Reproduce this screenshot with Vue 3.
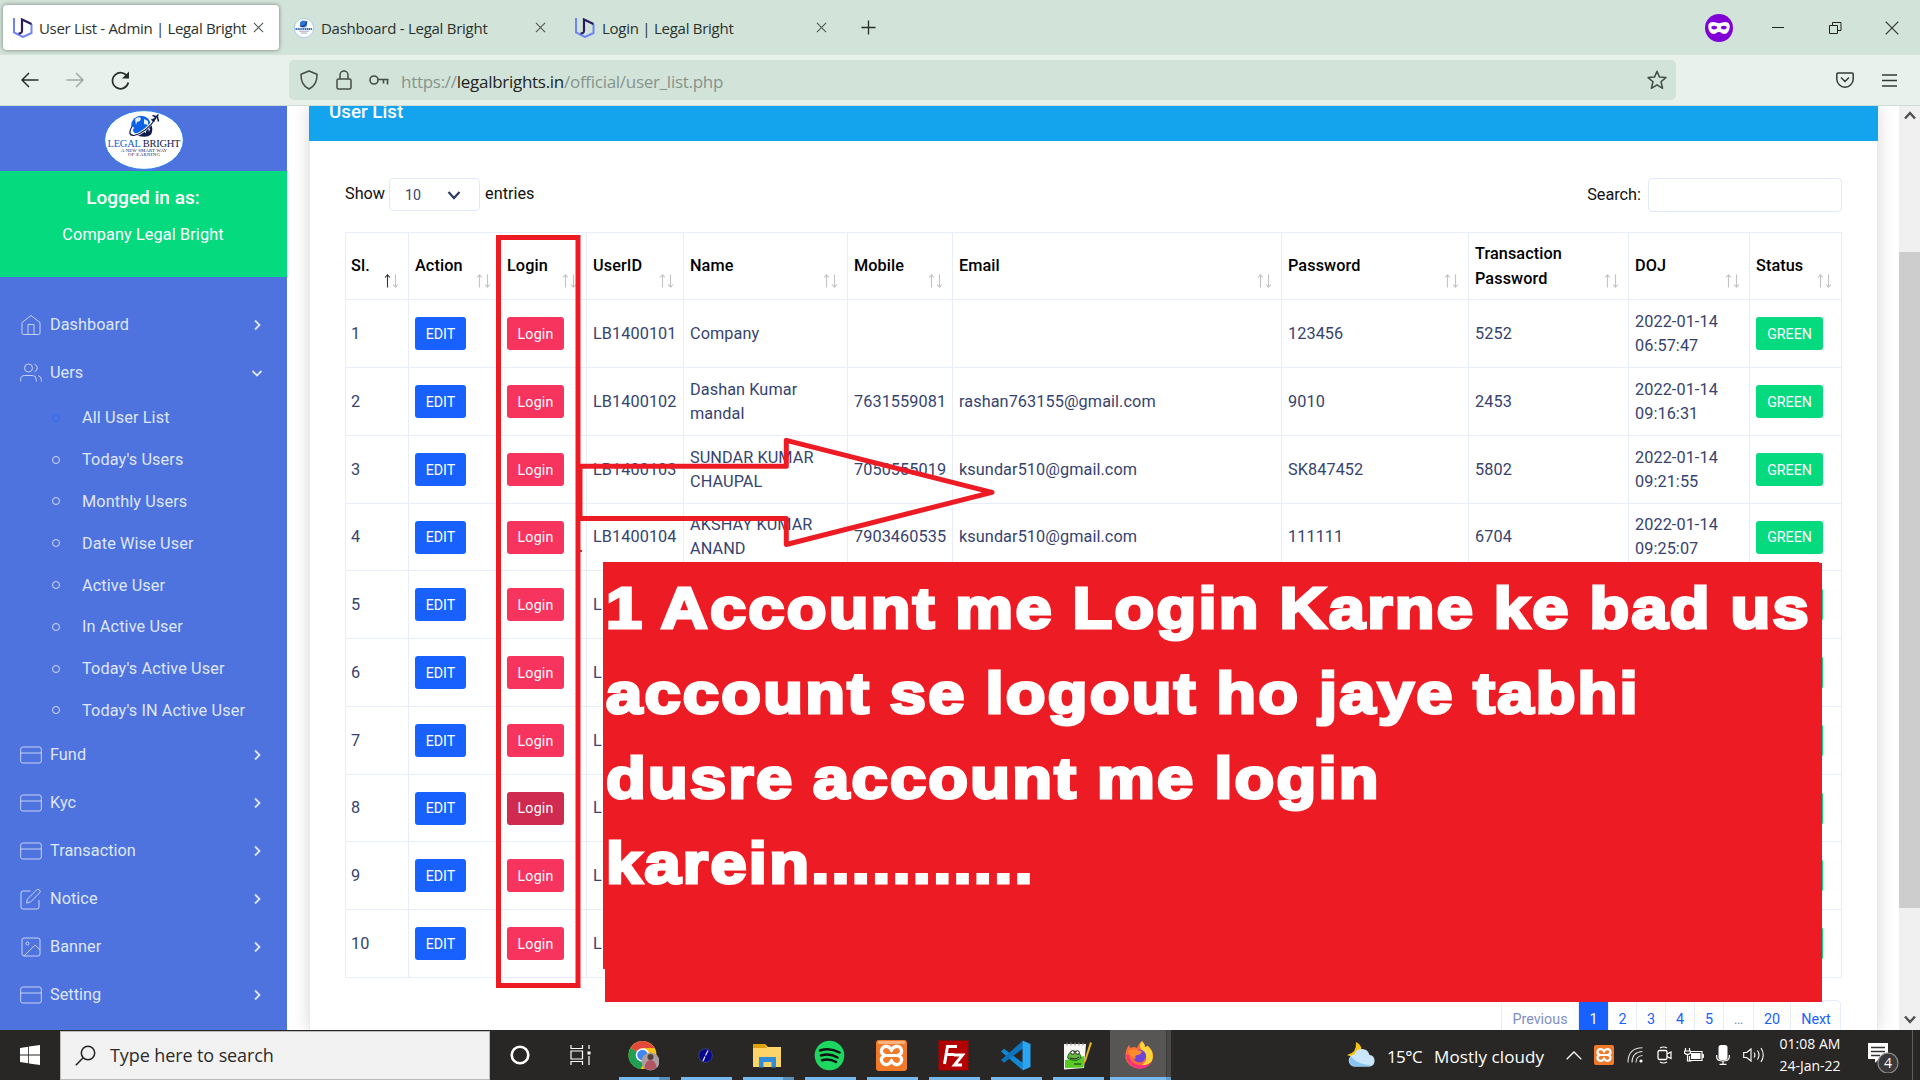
<script setup>
const tabs = [
  { title: 'User List - Admin | Legal Bright', icon: 'mark', active: true, width: 276 },
  { title: 'Dashboard - Legal Bright', icon: 'globe', active: false, width: 281 },
  { title: 'Login | Legal Bright', icon: 'mark', active: false, width: 281 },
]

const mainItems = [
  { label: 'Dashboard', icon: 'home' },
  { label: 'Uers', icon: 'users', open: true },
]
const subItems = [
  'All User List', "Today's Users", 'Monthly Users', 'Date Wise User',
  'Active User', 'In Active User', "Today's Active User", "Today's IN Active User",
]
const restItems = [
  { label: 'Fund', icon: 'card' },
  { label: 'Kyc', icon: 'card' },
  { label: 'Transaction', icon: 'card' },
  { label: 'Notice', icon: 'edit' },
  { label: 'Banner', icon: 'image' },
  { label: 'Setting', icon: 'card' },
]
const navGroups = [
  { items: mainItems, subs: subItems },
  { items: restItems, subs: [] },
]

const columns = [
  { title: 'Sl.', width: 63 },
  { title: 'Action', width: 92 },
  { title: 'Login', width: 86 },
  { title: 'UserID', width: 97 },
  { title: 'Name', width: 164 },
  { title: 'Mobile', width: 105 },
  { title: 'Email', width: 329 },
  { title: 'Password', width: 187 },
  { title: 'Transaction Password', width: 160 },
  { title: 'DOJ', width: 121 },
  { title: 'Status', width: 92 },
]

const users = [
  { id: 'LB1400101', name: 'Company', mobile: '', email: '', pw: '123456', tpw: '5252', doj: '2022-01-14 06:57:47', h: 68 },
  { id: 'LB1400102', name: 'Dashan Kumar mandal', mobile: '7631559081', email: 'rashan763155@gmail.com', pw: '9010', tpw: '2453', doj: '2022-01-14 09:16:31', h: 68 },
  { id: 'LB1400103', name: 'SUNDAR KUMAR CHAUPAL', mobile: '7050555019', email: 'ksundar510@gmail.com', pw: 'SK847452', tpw: '5802', doj: '2022-01-14 09:21:55', h: 68 },
  { id: 'LB1400104', name: 'AKSHAY KUMAR ANAND', mobile: '7903460535', email: 'ksundar510@gmail.com', pw: '111111', tpw: '6704', doj: '2022-01-14 09:25:07', h: 67 },
  { id: 'L', h: 68 },
  { id: 'L', h: 68 },
  { id: 'L', h: 68 },
  { id: 'L', h: 67, hover: true },
  { id: 'L', h: 68 },
  { id: 'L', h: 68 },
]

const pages = [
  { label: 'Previous', width: 77, muted: true },
  { label: '1', width: 30, active: true },
  { label: '2', width: 28 },
  { label: '3', width: 29 },
  { label: '4', width: 29 },
  { label: '5', width: 29 },
  { label: '…', width: 30, muted: true },
  { label: '20', width: 37 },
  { label: 'Next', width: 51 },
]

const apps = ['chrome', 'disc', 'folder', 'spotify', 'xampp', 'filezilla', 'vscode', 'notepad', 'firefox']
</script>

<template>
  <div class="screen">
    <header class="tabbar">
      <div v-for="(t, i) in tabs" :key="i" class="tab" :class="{ active: t.active }" :style="{ width: t.width + 'px' }">
        <svg v-if="t.icon === 'mark'" class="fav" viewBox="0 0 20 20">
          <path d="M1 0v14.5L10 19l8.500-4V6" fill="none" stroke="#7184f5" stroke-width="2" />
          <path d="M5.500 15.500c3 0 3.500-1 3.500-3V1.500L18.500 6" fill="none" stroke="#2a1a63" stroke-width="2.200" />
        </svg>
        <svg v-else class="fav" viewBox="0 0 20 20">
          <circle cx="10" cy="10" r="9.600" fill="#fff" stroke="#8fc0ee" stroke-width=".7" />
          <circle cx="9.500" cy="6" r="3.600" fill="#2a78d8" /><path d="M6 8q5 2 7-5" stroke="#14285c" fill="none" />
          <path d="M1.500 11h17" stroke="#3a6db8" stroke-width="1.800" stroke-dasharray="1.400 .5" /><path d="M5 13.200h10M7 15h6" stroke="#8a93b8" stroke-width=".8" />
        </svg>
        <span class="tab-title">{{ t.title }}</span>
        <svg class="tab-x" viewBox="0 0 12 12"><path d="M1 1l10 10M11 1L1 11" stroke="#4a524e" stroke-width="1.100" /></svg>
      </div>
      <svg class="plus" viewBox="0 0 16 16"><path d="M8 .5v15M.5 8h15" stroke="#27302b" stroke-width="1.400" /></svg>
      <div class="win">
        <svg width="28" height="28" viewBox="0 0 28 28">
          <circle cx="14" cy="14" r="14" fill="#8000d7" />
          <path d="M3.300 11.500C3.500 9 5.500 8 8 8c3 0 4.500 1.300 6 1.300S17 8 20 8c2.500 0 4.500 1 4.700 3.500.3 4-1.700 8.500-5.200 8.500-2.500 0-3.500-2-5.500-2s-3 2-5.500 2c-3.500 0-5.500-4.500-5.200-8.500z" fill="#fff" />
          <ellipse cx="9.200" cy="13.600" rx="2.900" ry="1.800" fill="#8000d7" /><ellipse cx="18.800" cy="13.600" rx="2.900" ry="1.800" fill="#8000d7" />
        </svg>
        <svg width="12" height="14" viewBox="0 0 12 14"><path d="M0 6.500h12" stroke="#222" /></svg>
        <svg width="13" height="14" viewBox="0 0 13 14"><path d="M.5 4.500h8v8h-8zM3.500 4v-2.500h8.500v8H9" fill="none" stroke="#222" /></svg>
        <svg width="14" height="14" viewBox="0 0 14 14"><path d="M.7.7l12.600 12.600M13.300.7L.7 13.300" stroke="#333" stroke-width="1.200" /></svg>
      </div>
    </header>

    <div class="toolbar">
      <div class="nav-buttons">
        <svg width="18" height="16" viewBox="0 0 18 16"><path d="M17.500 8H1M8 1L1 8l7 7" fill="none" stroke="#262e2a" stroke-width="1.500" /></svg>
        <svg width="18" height="16" viewBox="0 0 18 16"><path d="M.5 8H17M10 1l7 7-7 7" fill="none" stroke="#a0aaa4" stroke-width="1.500" /></svg>
        <svg width="19" height="19" viewBox="0 0 19 19"><path d="M17 7A8 8 0 1 0 17.300 11.500" fill="none" stroke="#262e2a" stroke-width="1.700" /><path d="M18 .5v7h-7z" fill="#262e2a" /></svg>
      </div>
      <div class="urlbar">
        <svg width="18" height="20" viewBox="0 0 18 20"><path d="M9 1l8 3.200C17 11 15.500 15.500 9 19 2.500 15.500 1 11 1 4.200z" fill="none" stroke="#444d48" stroke-width="1.500" stroke-linejoin="round" /></svg>
        <svg width="16" height="20" viewBox="0 0 16 20"><rect x="1" y="9" width="14" height="10" rx="1.500" fill="none" stroke="#444d48" stroke-width="1.500" /><path d="M4 9V5a4 4 0 0 1 8 0v4" fill="none" stroke="#444d48" stroke-width="1.500" /></svg>
        <svg width="20" height="12" viewBox="0 0 20 12"><circle cx="5" cy="6" r="4" fill="none" stroke="#444d48" stroke-width="1.600" /><path d="M9 5.500h10.500M14.500 5.500v4M18.500 5.500v5" fill="none" stroke="#444d48" stroke-width="1.600" /></svg>
        <span class="url">https://<b>legalbrights.in</b>/official/user_list.php</span>
        <svg class="star" width="20" height="20" viewBox="0 0 20 20"><path d="M10 1.200l2.500 5.900 6.400.5-4.900 4.200 1.600 6.500L10 14.800l-5.600 3.500L6 11.800 1.100 7.600l6.400-.5z" fill="none" stroke="#444d48" stroke-width="1.500" stroke-linejoin="round" /></svg>
      </div>
      <svg class="pocket" width="18" height="16" viewBox="0 0 18 16"><path d="M2 1h14a1.200 1.200 0 0 1 1.200 1.200V7a8.200 8.200 0 0 1-16.400 0V2.200A1.200 1.200 0 0 1 2 1zM5 5.500l4 4 4-4" fill="none" stroke="#333b37" stroke-width="1.500" /></svg>
      <svg class="menu" width="15" height="13" viewBox="0 0 15 13"><path d="M0 1h15M0 6.500h15M0 12h15" stroke="#333b37" stroke-width="1.300" /></svg>
    </div>

    <main class="page">
      <aside class="sidebar">
        <div class="brand">
          <svg width="80" height="60" viewBox="0 0 80 60">
            <ellipse cx="40" cy="30" rx="39.400" ry="29.400" fill="#fff" stroke="#2a7cf0" stroke-width="1" />
            <circle cx="37" cy="15.500" r="9.800" fill="#0d63e8" />
            <path d="M31 9q3-3 6-1l-1 3-3 1-1 3zM40 9l4 2v4l-4-1z" fill="#e3eeff" />
            <path d="M33 25.500q10-4 13-13 4 6 1 12-4 4-14 1z" fill="#101d4c" />
            <path d="M39 21l3-2v4zM44 17l2 2-1 3z" fill="#fff" />
            <path d="M29 17q-5 8 1 8.500Q42 23 52 7" fill="none" stroke="#fff" stroke-width="2.600" />
            <path d="M28 16.500q-5 9 2 9Q42 23 52 8" fill="none" stroke="#101d4c" stroke-width="1.200" />
            <path d="M48 11L54.500 4.500M48.500 5.500l5 1.500 1 4.500M47.500 9l3 2.500" fill="none" stroke="#101d4c" stroke-width="1.500" />
            <text x="40" y="37" class="logo-big" textLength="73"><tspan fill="#1560c8">LEGAL</tspan> <tspan fill="#14204f">BRIGHT</tspan></text>
            <text x="40" y="41.800" class="logo-small" textLength="46">A NEW SMART WAY</text>
            <text x="40" y="45.800" class="logo-small" textLength="32">OF EARNING</text>
          </svg>
        </div>
        <div class="who">
          <strong>Logged in as:</strong>
          <span>Company Legal Bright</span>
        </div>
        <nav>
          <template v-for="(g, gi) in navGroups" :key="gi">
            <div v-for="it in g.items" :key="it.label" class="item">
              <svg class="ico" width="22" height="22" viewBox="0 0 22 22">
                <template v-if="it.icon === 'home'"><path d="M2 8.500L11 1.500l9 7V19a1.500 1.500 0 0 1-1.500 1.500h-15A1.500 1.500 0 0 1 2 19zM8 20.500v-10h6v10" /></template>
                <template v-else-if="it.icon === 'users'"><circle cx="8.500" cy="6" r="4" /><path d="M.7 19.500v-2a4 4 0 0 1 4-4h7.600a4 4 0 0 1 4 4v2M14.500 2.200a4 4 0 0 1 0 7.600M21.300 19.500v-2a4 4 0 0 0-3-3.800" /></template>
                <template v-else-if="it.icon === 'card'"><rect x=".7" y="3" width="20.600" height="16" rx="2" /><path d="M.7 9h20.600" /></template>
                <template v-else-if="it.icon === 'edit'"><path d="M10.500 3H3a2 2 0 0 0-2 2v14a2 2 0 0 0 2 2h14a2 2 0 0 0 2-2v-7M16.500 2a2.100 2.100 0 0 1 3 3l-9 9-4 1 1-4z" /></template>
                <template v-else><rect x="2" y="2" width="18" height="18" rx="2" /><circle cx="7.500" cy="7.500" r="1.500" /><path d="M20 14l-5-5L4 20" /></template>
              </svg>
              <span>{{ it.label }}</span>
              <svg class="chev" width="12" height="12" viewBox="0 0 12 12"><path :d="it.open ? 'M1.500 4L6 8.500 10.500 4' : 'M4 1.500L8.500 6 4 10.500'" /></svg>
            </div>
            <div v-for="(s, si) in g.subs" :key="s" class="sub">
              <i class="bullet" :class="{ on: si === 0 }"></i><span>{{ s }}</span>
            </div>
          </template>
        </nav>
      </aside>

      <section class="content">
        <div class="card">
          <div class="card-head"><h2>User List</h2></div>
          <div class="controls">
            <div class="length">
              <span>Show</span>
              <div class="select"><span>10</span><svg width="14" height="10" viewBox="0 0 14 10"><path d="M1.500 2L7 8l5.500-6" fill="none" stroke="#2c3a66" stroke-width="2.200" /></svg></div>
              <span>entries</span>
            </div>
            <div class="search"><span>Search:</span><div class="search-box"></div></div>
          </div>

          <table>
            <colgroup><col v-for="c in columns" :key="c.title" :style="{ width: c.width + 'px' }" /></colgroup>
            <thead>
              <tr>
                <th v-for="(c, ci) in columns" :key="c.title">
                  <span>{{ c.title }}</span>
                  <svg class="sort" width="15" height="14" viewBox="0 0 15 14">
                    <path d="M3.500 13.500V1M1 3.500L3.500.8 6 3.500" :class="{ on: ci === 0 }" />
                    <path d="M11.500.5V13M9 10.500l2.500 2.700 2.500-2.700" />
                  </svg>
                </th>
              </tr>
            </thead>
            <tbody>
              <tr v-for="(u, ui) in users" :key="ui" :style="{ height: u.h + 'px' }">
                <td>{{ ui + 1 }}</td>
                <td><button class="btn blue">EDIT</button></td>
                <td><button class="btn pink" :class="{ hover: u.hover }">Login</button></td>
                <td>{{ u.id }}</td>
                <td>{{ u.name }}</td>
                <td>{{ u.mobile }}</td>
                <td>{{ u.email }}</td>
                <td>{{ u.pw }}</td>
                <td>{{ u.tpw }}</td>
                <td>{{ u.doj }}</td>
                <td><button class="btn green">GREEN</button></td>
              </tr>
            </tbody>
          </table>

          <div class="pager">
            <span v-for="p in pages" :key="p.label" :class="{ muted: p.muted, active: p.active }" :style="{ width: p.width + 'px' }">{{ p.label }}</span>
          </div>
        </div>
      </section>

      <div class="scroll">
        <svg width="12" height="9" viewBox="0 0 12 9"><path d="M1 7.500L6 2l5 5.500" fill="none" stroke="#505050" stroke-width="2.400" /></svg>
        <div class="thumb"></div>
        <svg class="down" width="12" height="9" viewBox="0 0 12 9"><path d="M1 1.500L6 7l5-5.500" fill="none" stroke="#505050" stroke-width="2.400" /></svg>
      </div>
    </main>

    <svg class="marks" width="1920" height="1080" viewBox="0 0 1920 1080">
      <rect x="498.500" y="237.500" width="79.500" height="748" />
      <path d="M580 466.300h206.300v-26L992 492.300 786.300 544.500v-26H580z" stroke-linejoin="round" />
      <path class="fill" d="M603 562h1216v1h3v439H605v-33h-2zM580 550h2v2h-2z" />
    </svg>
    <div class="note">
      <p>1 Account me Login Karne ke bad us</p>
      <p>account se logout ho jaye tabhi</p>
      <p>dusre account me login</p>
      <p>karein...........</p>
    </div>

    <footer class="taskbar">
      <div class="start"><svg width="20" height="20" viewBox="0 0 20 20"><path d="M0 2.900l8.200-1.200v7.800H0zM9 1.600L20 0v9.500H9zM0 10.400h8.200v7.900L0 17.100zM9 10.400h11V20L9 18.400z" fill="#fff" /></svg></div>
      <div class="find">
        <svg width="21" height="21" viewBox="0 0 21 21"><circle cx="13" cy="8" r="6.700" fill="none" stroke="#222" stroke-width="1.500" /><path d="M8.200 12.800L.8 20.200" stroke="#222" stroke-width="1.500" /></svg>
        <span>Type here to search</span>
      </div>
      <div class="sys"><svg width="20" height="20" viewBox="0 0 20 20"><circle cx="10" cy="10" r="8.300" fill="none" stroke="#fff" stroke-width="2.600" /></svg></div>
      <div class="sys wide"><svg width="21" height="20" viewBox="0 0 21 20"><path d="M1 0v3.500h11.500V0M1 20v-3.500h11.500V20M1 6h11.500v8H1zM19 0v4M19 11v9" fill="none" stroke="#fff" stroke-width="1.200" /><rect x="17.500" y="6.500" width="3" height="3" fill="#fff" /></svg></div>
      <div class="apps">
        <div v-for="a in apps" :key="a" class="app" :class="a">
          <svg width="31" height="31" viewBox="0 0 31 31">
            <template v-if="a === 'chrome'">
              <circle cx="14.500" cy="15" r="14" fill="#fbc116" /><path d="M14.500 15L2.400 8A14 14 0 0 1 26.600 8H14.500z" fill="#e2493b" /><path d="M14.500 15L2.400 8A14 14 0 0 0 12.500 29l5-8z" fill="#1fa053" />
              <circle cx="14.500" cy="15" r="6.800" fill="#fff" /><circle cx="14.500" cy="15" r="5.300" fill="#4285f4" />
              <circle cx="22.500" cy="21.500" r="9" fill="#a99fa0" /><circle cx="22.500" cy="17" r="3" fill="#57403a" /><path d="M16.500 28q1-8 6-8t6 8q-6 4-12 0z" fill="#b25560" />
            </template>
            <template v-else-if="a === 'disc'"><circle cx="15.500" cy="15.500" r="6.800" fill="#06068c" stroke="#4c5a8a" stroke-width=".6" /><path d="M18 10.500l-2.500 5M15 16.500L13 21" stroke="#e3e6fa" stroke-width="1.200" /></template>
            <template v-else-if="a === 'folder'"><path d="M1 4h12l3 3h13v20H1z" fill="#fdd468" /><path d="M1 4h12l2 4H1z" fill="#e0a008" /><path d="M7 27.500V17h17v10.500h-4.500V22h-8v5.500z" fill="#2f8edb" /></template>
            <template v-else-if="a === 'spotify'"><circle cx="15.500" cy="15.500" r="14.800" fill="#1ed760" /><path d="M6 10.500q10-3.500 19.500 2M7 15.500q9-2.500 16.500 2M8 20.300q7.500-2 14 1.700" fill="none" stroke="#111" stroke-width="2.500" stroke-linecap="round" /></template>
            <template v-else-if="a === 'xampp'"><rect width="31" height="31" rx="3" fill="#f07a29" /><rect x="2" y="1" width="27" height="3" rx="1" fill="#f8b27e" /><path d="M9.500 15.500c-7-2-4-9.500 1.500-9 3 .3 3.500 2 4.500 3.500C16.500 8.500 17 6.800 20 6.500c5.500-.5 8.500 7 1.500 9 7 2 4 9.500-1.500 9-3-.3-3.500-2-4.500-3.500-1 1.500-1.500 3.200-4.500 3.500-5.500.5-8.500-7-1.500-9z" fill="none" stroke="#fff" stroke-width="3.300" /><path d="M11 15.500h9" stroke="#fff" stroke-width="3" /></template>
            <template v-else-if="a === 'filezilla'"><rect x="1" y="1" width="29" height="29" fill="#b30000" stroke="#b30000" stroke-width="1.500" stroke-dasharray="2 1.500" /><path d="M6.500 24L9.500 6.500H19M8 14.500h8M16 15h8.500l-8 10H24" fill="none" stroke="#fff" stroke-width="3" /></template>
            <template v-else-if="a === 'vscode'"><path d="M22.500 30L1 11.500l3-2.700L23 23z" fill="#1287d4" /><path d="M22.500 1L1 20l3 2.700L23 8.500z" fill="#0d73bd" /><path d="M22.500.5L30.500 4v23l-8 3.500z" fill="#29a5f2" /></template>
            <template v-else-if="a === 'notepad'"><path d="M2 4h22l-2 24-20 1.500z" fill="#f7f7f4" /><path d="M3 20l19.500-4-1 11.500L3 28z" fill="#57cb23" /><path d="M5 2.500v3M9 2.500v3M13 2.500v3M17 2.500v3M21 2.500v3" stroke="#888" /><path d="M5.500 18q1-7 6.500-7 6 0 7 7-6 5-13.500 0z" fill="#68b53c" stroke="#263" /><circle cx="10.500" cy="12.500" r="1.800" fill="#fff" stroke="#222" /><circle cx="15.500" cy="12.500" r="1.800" fill="#fff" stroke="#222" /><path d="M8 18q6 2 9-1M12 24h7" stroke="#122a12" fill="none" /><path d="M22 21l6-19 2 1-6 18-2 3z" fill="#e5b322" /></template>
            <template v-else>
              <path d="M18 1q3 3 3 6l3-1q6 5 5 12A14 13 0 0 1 1.500 18Q1 10 5 5l1.500 3Q10 6 13 8q1-4 5-7z" fill="#fb6d32" /><path d="M18 1q3 3 3 6l3-1q7 7 4 15-4 5-10 4 7-5 3-12-6-4-5-9z" fill="#ffd43c" /><path d="M2 15q1 11 13 14 8-.5 12-6-6 3-12 2Q6 23 5 15z" fill="#f6327f" /><circle cx="15.500" cy="16" r="6.500" fill="#7044d8" /><path d="M4 11q5-3 9-1l5 1q-1 4-5 4-3 1-1 4-5-1-8-8z" fill="#fd8b2d" />
            </template>
          </svg>
        </div>
      </div>
      <div class="tray">
        <svg class="weather" width="28" height="25" viewBox="0 0 28 25"><path d="M9 0q8 4 4 11-5 6-13 2 10-2 9-13z" fill="#f9c513" /><path d="M8 24.500a6 6 0 0 1-.5-12Q9 7 15 7t7.500 6a5.800 5.800 0 0 1 0 11.500z" fill="#cbe6fb" /><path d="M8 24.500a6 6 0 0 1-4-10q6 8 21 9l-2.500 1z" fill="#8cc4f1" /></svg>
        <span class="temp">15°C</span><span class="cloudy">Mostly cloudy</span>
        <svg class="up" width="16" height="9" viewBox="0 0 16 9"><path d="M.7 8.300L8 1l7.300 7.300" fill="none" stroke="#fff" stroke-width="1.300" /></svg>
        <svg class="tx" width="20" height="20" viewBox="0 0 31 31"><rect width="31" height="31" rx="3" fill="#f07a29" /><path d="M9.500 15.500c-7-2-4-9.500 1.500-9 3 .3 3.500 2 4.500 3.500C16.500 8.500 17 6.800 20 6.500c5.500-.5 8.500 7 1.500 9 7 2 4 9.500-1.500 9-3-.3-3.500-2-4.500-3.500-1 1.500-1.500 3.200-4.500 3.500-5.500.5-8.500-7-1.500-9z" fill="none" stroke="#fff" stroke-width="3.500" /><path d="M11 15.500h9" stroke="#fff" stroke-width="3" /></svg>
        <svg class="wifi" width="16" height="16" viewBox="0 0 16 16"><circle cx="14" cy="14" r="1.600" fill="#fff" /><path d="M9 15.500Q9 9 15.500 8.500M5 15.500Q5 5 15.500 4.500M1 15.500Q1 1 15.500.8" fill="none" stroke="#ddd" stroke-width="1.100" /></svg>
        <svg class="meet" width="16" height="18" viewBox="0 0 16 18"><rect x="1" y="4.500" width="9" height="9" rx="1.500" fill="none" stroke="#fff" stroke-width="1.300" /><path d="M10 8l4-2v6.500L10 10.500M3 2q3.500-2 7 0M3 16q3.500 2 7 0" fill="none" stroke="#fff" stroke-width="1.200" /></svg>
        <svg class="bat" width="20" height="15" viewBox="0 0 20 15"><path d="M1.500 0v3M5.500 0v3M.5 3h6v2q-3 3-6 0zM3.500 6v7h4" fill="none" stroke="#fff" stroke-width="1.200" /><path d="M7 3.500h11v9H5.500V8M19.300 6v4" fill="none" stroke="#fff" stroke-width="1.200" /><rect x="7" y="5" width="9.500" height="6" fill="#fff" /></svg>
        <svg class="mic" width="14" height="20" viewBox="0 0 14 20"><rect x="2.500" y="0" width="9" height="15" rx="2.500" fill="#fff" /><path d="M.7 10v2q0 4 6.300 4t6.300-4v-2M7 16v3.300M3.500 19.300h7" fill="none" stroke="#fff" stroke-width="1.200" /></svg>
        <svg class="vol" width="22" height="16" viewBox="0 0 22 16"><path d="M.7 5.500h3L8 2v12l-4.300-3.500h-3zM11 5.500q1.800 2.500 0 5M14.500 3.500q3 4.500 0 9M18 1q4.500 7 0 14" fill="none" stroke="#fff" stroke-width="1.100" /></svg>
        <div class="clock"><span>01:08 AM</span><span>24-Jan-22</span></div>
        <svg class="bell" width="32" height="32" viewBox="0 0 32 32"><path d="M1 2h20v16h-9l-4 4v-4H1z" fill="#fff" /><path d="M4 6.500h14M4 10.500h14M4 14.500h9" stroke="#333" stroke-width="1.300" /><circle cx="21" cy="22" r="10" fill="#3a3a3a" stroke="#909090" stroke-width="1.200" /><text x="21" y="27" text-anchor="middle" class="count">4</text></svg>
        <i class="peek"></i>
      </div>
    </footer>
  </div>
</template>

<style>
html, body { margin: 0; overflow: hidden; }
</style>

<style scoped>
* { box-sizing: border-box; }
svg { display: block; flex: none; }
.screen { position: relative; width: 1920px; height: 1080px; overflow: hidden; display: flex; flex-direction: column; font-family: Roboto, sans-serif; background: #fff; }

.tabbar { height: 55px; flex: none; display: flex; align-items: center; padding-left: 3px; background: #d2e3d9; font-family: "Open Sans", sans-serif; color: #2a322d; }
.tab { height: 45px; display: flex; align-items: center; padding: 0 14px 0 15px; border-radius: 4px; }
.tab:first-child { padding: 0 15px 0 10px; }
.tab.active { background: #fff; box-shadow: 0 0 4px rgba(0, 0, 0, .45); }
.fav { width: 20px; height: 20px; margin-right: 7px; }
.tab:first-child .fav { margin-right: 6px; }
.tab-title { font-size: 15px; letter-spacing: -.26px; white-space: nowrap; margin-top: 1px; }
.tab:first-child .tab-title { letter-spacing: -.32px; }
.tab-x { width: 11px; height: 11px; margin-left: auto; }
.plus { width: 15px; height: 15px; margin-left: 20px; }
.win { margin-left: auto; display: flex; align-items: center; padding-right: 21px; }
.win svg:nth-child(1) { margin-right: 39px; }
.win svg:nth-child(2) { margin-right: 45px; }
.win svg:nth-child(3) { margin-right: 43px; }

.toolbar { height: 51px; flex: none; display: flex; align-items: center; background: #e9f1ec; border-bottom: 1px solid #cfdcd4; }
.nav-buttons { width: 289px; padding-left: 21px; display: flex; align-items: center; gap: 27px; }
.urlbar { width: 1387px; height: 40px; display: flex; align-items: center; background: #d2e3d9; border-radius: 5px; padding-left: 11px; }
.urlbar svg:nth-child(1) { margin-right: 18px; }
.urlbar svg:nth-child(2) { margin-right: 17px; }
.urlbar svg:nth-child(3) { margin-right: 12px; }
.url { font: 17px "Open Sans", sans-serif; letter-spacing: -.28px; color: #87948d; margin-top: 2px; }
.url b { font-weight: 400; color: #1e2521; }
.star { margin-left: auto; margin-right: 9px; }
.pocket { margin-left: 160px; }
.menu { margin-left: 28px; }

.page { height: 924px; flex: none; display: flex; background: #fff; overflow: hidden; }
.sidebar { width: 287px; background: #4e73df; color: #dfe6fa; }
.brand { height: 65px; display: flex; justify-content: center; padding-top: 4px; padding-left: 1px; }
.logo-big { font: 10.500px "Liberation Serif", serif; text-anchor: middle; }
.logo-small { font: 4.800px "Liberation Serif", serif; text-anchor: middle; fill: #14204f; }
.who { height: 106px; background: #05da7f; color: #fff; display: flex; flex-direction: column; align-items: center; padding-right: 1px; }
.who strong { font-size: 19px; line-height: 24px; font-weight: 500; margin-top: 15px; }
.who span { font-size: 16.300px; letter-spacing: .1px; line-height: 20px; margin-top: 15px; }
nav { padding-top: 24px; font-size: 16.250px; }
.item { height: 48px; display: flex; align-items: center; padding: 0 24px 0 20px; }
.ico { fill: none; stroke: #d3dcf6; stroke-width: .9; margin-right: 8px; }
.item > span { margin-top: -1px; letter-spacing: .05px; }
.chev { margin-left: auto; fill: none; stroke: #dfe6fa; stroke-width: 1.800; }
.sub { height: 41.800px; display: flex; align-items: center; padding-left: 52px; }
.sub > span { letter-spacing: .12px; }
.bullet { width: 8px; height: 8px; border: 1.500px solid #d3dcf6; border-radius: 50%; margin-right: 22px; }
.bullet.on { border-color: #2e69f5; }

.content { width: 1612px; padding-left: 22px; }
.card { width: 1569px; height: 100%; background: #fff; box-shadow: 0 0 16px rgba(0, 0, 0, .16); border-left: 1px solid #e4eaf8; border-right: 1px solid #e4eaf8; display: flex; flex-direction: column; padding: 0 36px 0 35px; }
.card-head { height: 35px; flex: none; background: #14a4ed; margin: 0 -37px 0 -36px; padding-left: 20px; color: #fff; }
.card-head h2 { margin: -6px 0 0; font-size: 18.800px; line-height: 24px; font-weight: 500; }
.controls { height: 91px; flex: none; padding-top: 37px; display: flex; justify-content: space-between; align-items: flex-start; font-size: 16.250px; color: #111; }
.length, .search { display: flex; align-items: center; }
.length > span { margin-top: -2px; }
.search > span { margin-top: -1px; }
.search { margin-right: -1px; }
.select { width: 91px; height: 33px; border: 1px solid #e1e8fa; border-radius: 4px; margin: 0 5px 0 4px; display: flex; align-items: center; justify-content: space-between; padding: 0 18px 0 15px; font-size: 14.300px; color: #3a4770; }
.search-box { width: 194px; height: 34px; border: 1px solid #e1e8fa; border-radius: 4px; margin-left: 7px; }

table { width: 1497px; flex: none; table-layout: fixed; border-spacing: 0; border-left: 1px solid #e8edfb; border-top: 1px solid #e8edfb; font-size: 16.250px; color: #36436f; letter-spacing: .08px; }
th, td { padding: 0 6px; border-right: 1px solid #e8edfb; border-bottom: 1px solid #e8edfb; text-align: left; vertical-align: middle; line-height: 24px; }
th:first-child, td:first-child { padding-left: 5px; }
th { height: 67px; position: relative; font-weight: 500; color: #000; line-height: 25px; }
th span { display: block; margin-top: -1px; }
.sort { position: absolute; right: 9px; bottom: 11px; fill: none; stroke: #c3c3c3; stroke-width: 1.100; }
.sort .on { stroke: #333; }
.btn { display: block; border: 0; height: 33px; border-radius: 3px; padding: 0; color: #fff; font: 14.200px Roboto, sans-serif; }
.blue { width: 51px; background: #1861ff; }
.pink { width: 57px; background: #f7345e; letter-spacing: .2px; }
.pink.hover { background: #cf2a4f; }
.green { width: 67px; background: #05da7f; }

.pager { display: flex; align-self: flex-end; margin-top: 22px; flex: none; height: 37px; border: 1px solid #e8edfb; border-radius: 4px; overflow: hidden; font-size: 14.300px; color: #1861ff; width: 340px; }
.pager span { height: 36px; display: flex; align-items: center; justify-content: center; border-right: 1px solid #e8edfb; flex: none; }
.pager .muted { color: #7f8fc4; }
.pager .active { background: #1861ff; color: #fff; }

.scroll { width: 21px; background: #f0f0f0; display: flex; flex-direction: column; align-items: center; padding-top: 5px; }
.thumb { width: 21px; height: 656px; margin-top: 132px; background: #cdcdcd; }
.down { margin-top: 107px; }

.marks { position: absolute; left: 0; top: 0; fill: none; stroke: #ed1c24; stroke-width: 5; }
.marks .fill { fill: #ed1c24; stroke: none; }
.note { position: absolute; left: 606px; top: 566px; color: #fff; font: bold 57px/85px "Liberation Sans", sans-serif; -webkit-text-stroke: 3px #fff; white-space: nowrap; transform: scaleX(1.14); transform-origin: 0 0; }
.note p { margin: 0; letter-spacing: 2px; word-spacing: -1.400px; }

.taskbar { height: 50px; flex: none; display: flex; background: #292726; color: #fff; font-family: "Open Sans", sans-serif; }
.start { width: 60px; display: flex; align-items: center; padding-left: 20px; }
.find { width: 430px; height: 49px; margin-top: 1px; background: #f2f2f2; border: 1px solid #bbb; display: flex; align-items: center; padding-left: 14px; gap: 14px; color: #2b2b2b; font-size: 18px; letter-spacing: -.1px; }
.find span { margin-top: -2px; }
.sys { width: 60px; display: flex; align-items: center; justify-content: center; }
.wide { width: 63px; padding-right: 3px; }
.apps { display: flex; }
.app { width: 62px; height: 50px; display: flex; align-items: center; justify-content: center; position: relative; }
.app::after { content: ""; position: absolute; left: 6px; bottom: 0; width: 51px; height: 3px; background: #76b9ed; }
.app.chrome::after, .app.folder::after { background: linear-gradient(90deg, #76b9ed 40px, #5a91bb 40px); }
.firefox::before { content: ""; position: absolute; left: 1px; top: 0; width: 61px; height: 50px; background: linear-gradient(90deg, #575655 56px, #3b3a39 56px, #3b3a39 57px, #4a4948 57px); }
.app.firefox svg { position: relative; }
.app.firefox::after { left: 1px; width: 61px; background: linear-gradient(90deg, #76b9ed 56px, #5f9cc9 56px); }
.app svg { margin-right: 1px; }
.tray { margin-left: auto; width: 573px; display: flex; align-items: center; font-size: 17px; }
.weather { margin-right: 12px; margin-top: -1px; }
.temp { width: 47px; letter-spacing: -.6px; margin-top: 2px; }
.cloudy { width: 132px; letter-spacing: .1px; margin-top: 2px; white-space: nowrap; }
.up { margin-right: 12px; }
.tx { margin-right: 13px; }
.wifi { margin-right: 14px; }
.meet { margin-right: 11px; }
.bat { margin-right: 12px; }
.mic { margin-right: 13px; }
.vol { margin-right: 10px; }
.clock { width: 70px; font-size: 14px; letter-spacing: 0; line-height: 22.500px; display: flex; flex-direction: column; align-items: center; white-space: nowrap; }
.bell { margin-left: 22px; margin-top: 4px; }
.count { font: 14px "Open Sans", sans-serif; fill: #fff; }
.peek { width: 1px; height: 50px; margin-left: 13px; background: #5d5c5b; }
</style>
